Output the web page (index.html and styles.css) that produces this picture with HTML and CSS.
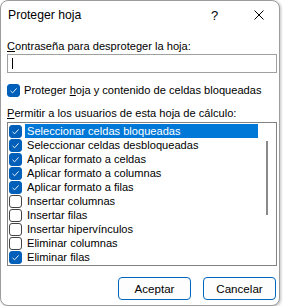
FILE: index.html
```html
<!DOCTYPE html>
<html lang="es">
<head>
    <meta charset="UTF-8">
    <title>Proteger hoja</title>
    <link rel="stylesheet" href="styles.css">
</head>
<body>
    <div class="dialog">
        <div class="titlebar">
            <span class="title">Proteger hoja</span>
            <span class="help">?</span>
            <span class="close">
                <svg width="10" height="10" viewBox="0 0 10 10"><path d="M0.5 0.5 L9.5 9.5 M9.5 0.5 L0.5 9.5" stroke="#000" stroke-width="1" fill="none"/></svg>
            </span>
        </div>
        <div class="content">
            <div class="field-label"><u>C</u>ontraseña para desproteger la hoja:</div>
            <div class="input"><span class="caret"></span></div>

            <div class="check-row">
                <span class="box checked">
                    <svg width="9" height="9" viewBox="0 0 9 9"><path d="M1.5 4.8 L3.6 6.8 L7.6 2.4" stroke="#fff" stroke-width="0.9" fill="none"/></svg>
                </span>
                <span>Proteger <u>h</u>oja y contenido de celdas bloqueadas</span>
            </div>

            <div class="field-label"><u>P</u>ermitir a los usuarios de esta hoja de cálculo:</div>
            <div class="list">
                <div class="items">
                    <div class="item selected"><span class="box checked"><svg width="9" height="9" viewBox="0 0 9 9"><path d="M1.5 4.8 L3.6 6.8 L7.6 2.4" stroke="#fff" stroke-width="0.9" fill="none"/></svg></span><span class="text">Seleccionar celdas bloqueadas</span></div>
                    <div class="item"><span class="box checked"><svg width="9" height="9" viewBox="0 0 9 9"><path d="M1.5 4.8 L3.6 6.8 L7.6 2.4" stroke="#fff" stroke-width="0.9" fill="none"/></svg></span><span class="text">Seleccionar celdas desbloqueadas</span></div>
                    <div class="item"><span class="box checked"><svg width="9" height="9" viewBox="0 0 9 9"><path d="M1.5 4.8 L3.6 6.8 L7.6 2.4" stroke="#fff" stroke-width="0.9" fill="none"/></svg></span><span class="text">Aplicar formato a celdas</span></div>
                    <div class="item"><span class="box checked"><svg width="9" height="9" viewBox="0 0 9 9"><path d="M1.5 4.8 L3.6 6.8 L7.6 2.4" stroke="#fff" stroke-width="0.9" fill="none"/></svg></span><span class="text">Aplicar formato a columnas</span></div>
                    <div class="item"><span class="box checked"><svg width="9" height="9" viewBox="0 0 9 9"><path d="M1.5 4.8 L3.6 6.8 L7.6 2.4" stroke="#fff" stroke-width="0.9" fill="none"/></svg></span><span class="text">Aplicar formato a filas</span></div>
                    <div class="item"><span class="box"></span><span class="text">Insertar columnas</span></div>
                    <div class="item"><span class="box"></span><span class="text">Insertar filas</span></div>
                    <div class="item"><span class="box"></span><span class="text">Insertar hipervínculos</span></div>
                    <div class="item"><span class="box"></span><span class="text">Eliminar columnas</span></div>
                    <div class="item"><span class="box checked"><svg width="9" height="9" viewBox="0 0 9 9"><path d="M1.5 4.8 L3.6 6.8 L7.6 2.4" stroke="#fff" stroke-width="0.9" fill="none"/></svg></span><span class="text">Eliminar filas</span></div>
                </div>
                <div class="scroll"><div class="thumb"></div></div>
            </div>

            <div class="buttons">
                <button class="btn default">Aceptar</button>
                <button class="btn">Cancelar</button>
            </div>
        </div>
    </div>
</body>
</html>
```

FILE: styles.css
```css
body {
    margin: 0;
    padding: 0;
    background-color: #ffffff;
    font-family: "Liberation Sans", Arial, sans-serif;
    font-size: 11.1px;
    color: #000;
}
.dialog {
    width: 278px;
    height: 304px;
    border: 1px solid #9c9c9c;
    border-radius: 8px;
    background-color: #ffffff;
    box-shadow: 1px 1px 3px rgba(0, 0, 0, 0.25);
    overflow: hidden;
}
.titlebar {
    display: flex;
    align-items: center;
    height: 28px;
    padding-left: 7px;
}
.title {
    flex: 1;
    font-size: 12.2px;
}
.help {
    width: 43px;
    font-size: 13px;
}
.close {
    display: flex;
    width: 25px;
}
.content {
    padding: 10px 2px 0 6px;
}
.field-label {
    height: 14px;
    line-height: 14px;
}
.input {
    box-sizing: border-box;
    height: 19px;
    margin-top: 1px;
    border: 1px solid #a0a0a0;
    display: flex;
    align-items: center;
    padding-left: 4px;
}
.caret {
    width: 1px;
    height: 11px;
    background-color: #000;
}
.check-row {
    display: flex;
    align-items: center;
    gap: 4px;
    height: 14px;
    line-height: 14px;
    margin-top: 10px;
    margin-bottom: 9px;
}
.box {
    display: flex;
    align-items: center;
    justify-content: center;
    width: 11px;
    height: 11px;
    border: 1px solid #444;
    border-radius: 3px;
    background-color: #fff;
    flex-shrink: 0;
}
.box.checked {
    background-color: #005fb8;
    border-color: #005fb8;
}
.list {
    display: flex;
    box-sizing: border-box;
    height: 144px;
    margin-top: 2px;
    border: 1px solid #828282;
    overflow: hidden;
}
.items {
    flex: 1;
    padding: 1px 0 0 1px;
}
.item {
    display: flex;
    align-items: center;
    height: 14px;
}
.item .text {
    flex: 1;
    height: 14px;
    line-height: 14px;
    margin-left: 3px;
    padding-left: 2px;
}
.item.selected .text {
    background-color: #0078d7;
    color: #fff;
}
.scroll {
    width: 10px;
    padding-left: 8px;
}
.thumb {
    width: 2px;
    height: 74px;
    margin-top: 18px;
    background-color: #8a8a8a;
}
.buttons {
    display: flex;
    justify-content: flex-end;
    gap: 12px;
    margin-top: 11px;
    margin-right: 1px;
}
.btn {
    width: 73px;
    height: 23px;
    padding: 0;
    font-family: inherit;
    font-size: 11.6px;
    color: #000;
    background-color: #fdfdfd;
    border: 1px solid #0067c0;
    border-radius: 4px;
}
```
